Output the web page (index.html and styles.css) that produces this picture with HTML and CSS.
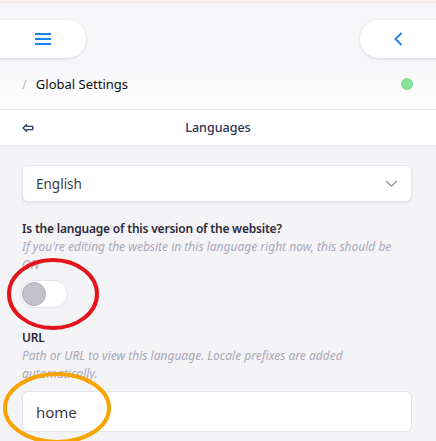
FILE: index.html
```html
<!DOCTYPE html>
<html lang="en">
<head>
  <meta charset="UTF-8">
  <meta name="viewport" content="width=device-width, initial-scale=1.0">
  <title>Global Settings - Languages</title>
  <link rel="stylesheet" href="styles.css">
</head>
<body>
  <div class="app">
    <header class="topbar">
      <button class="pill pill-left" aria-label="Menu">
        <svg width="16" height="12" viewBox="0 0 16 12"><path d="M0 1h16M0 6h16M0 11h16" stroke="#1a82f7" stroke-width="2"/></svg>
      </button>
      <button class="pill pill-right" aria-label="Back">
        <svg width="9" height="14" viewBox="0 0 9 14"><path d="M7.5 1L1.5 7l6 6" fill="none" stroke="#1a82f7" stroke-width="1.8"/></svg>
      </button>
    </header>

    <nav class="crumbs">
      <span class="sep">/</span>
      <span class="crumb">Global Settings</span>
      <span class="status"></span>
    </nav>

    <div class="panel-head">
      <svg class="back" width="12" height="8" viewBox="0 0 12 8"><path d="M4.5 0.8L1 4l3.5 3.2V5.6h6.2V2.4H4.5z" fill="none" stroke="#2f3a6e" stroke-width="1.4" stroke-linejoin="round"/></svg>
      <h2>Languages</h2>
    </div>

    <main class="form">
      <div class="select">
        <span>English</span>
        <svg width="13" height="7" viewBox="0 0 13 7"><path d="M1 1l5.5 5L12 1" fill="none" stroke="#9d97ab" stroke-width="1.5"/></svg>
      </div>

      <div class="field">
        <label>Is the language of this version of the website?</label>
        <p class="hint">If you're editing the website in this language right now, this should be ON</p>
        <div class="toggle"><span class="knob"></span></div>
      </div>

      <div class="field">
        <label>URL</label>
        <p class="hint">Path or URL to view this language. Locale prefixes are added automatically.</p>
        <div class="input">home</div>
      </div>
    </main>

    <!-- annotation marks drawn over the form -->
    <svg class="mark mark-red" width="96" height="76" viewBox="0 0 96 76"><ellipse cx="48" cy="38" rx="44" ry="34" fill="none" stroke="#e3141c" stroke-width="4"/></svg>
    <svg class="mark mark-orange" width="112" height="76" viewBox="0 0 112 76"><ellipse cx="56" cy="38" rx="52" ry="34" fill="none" stroke="#f7a400" stroke-width="4"/></svg>
  </div>
</body>
</html>
```

FILE: styles.css
```css
* {
  margin: 0;
  padding: 0;
  box-sizing: border-box;
}

body {
  font-family: "Noto Sans", "Open Sans", sans-serif;
  background-color: #f4f4f7;
  color: #2c2a3a;
  overflow: hidden;
}

.app {
  position: relative;
  width: 436px;
  height: 441px;
  overflow: hidden;
}

/* pasek z przyciskami */
.topbar {
  display: flex;
  justify-content: space-between;
  margin-top: 2px;
  padding: 17px 0 7px;
  border-top: 1px solid #fde3d6;
  background-color: #f6f6f8;
}

.pill {
  display: flex;
  align-items: center;
  justify-content: center;
  height: 38px;
  border: none;
  border-radius: 19px;
  background-color: #fff;
  box-shadow: 0 1px 3px rgba(40, 40, 80, 0.14);
  cursor: pointer;
}

.pill-left {
  width: 116px;
  margin-left: -30px;
  padding-left: 30px;
}

.pill-right {
  width: 110px;
  margin-right: -34px;
  padding-right: 34px;
}

.crumbs {
  display: flex;
  align-items: center;
  height: 45px;
  padding: 0 23px 6px 22px;
  background: linear-gradient(#f8f8fa, #fdfdfe);
  border-bottom: 1px solid #e2e2ea;
  font-size: 13px;
}

.sep {
  color: #b4b4be;
  margin-right: 9px;
}

.crumb {
  color: #111;
  flex: 1;
}

.status {
  width: 12px;
  height: 12px;
  border-radius: 50%;
  background-color: #88e39d;
  border: 1px solid #7bd992;
}

.panel-head {
  position: relative;
  height: 36px;
  display: flex;
  align-items: center;
  justify-content: center;
  background-color: #fff;
  border-bottom: 1px solid #e9e9ef;
}

.panel-head .back {
  position: absolute;
  left: 22px;
  top: 14px;
}

.panel-head h2 {
  font-size: 12.5px;
  font-weight: 500;
  color: #2e3154;
}

.form {
  padding: 19px 24px 0 22px;
}

.select {
  display: flex;
  align-items: center;
  justify-content: space-between;
  height: 37px;
  padding: 0 13px;
  background-color: #fff;
  border: 1px solid #e6e4ee;
  border-radius: 6px;
  box-shadow: 0 1px 2px rgba(60, 50, 100, 0.12);
  font-size: 13.5px;
  color: #3d3b4a;
  margin-bottom: 18px;
}

.field label {
  display: block;
  font-size: 12px;
  font-weight: 600;
  line-height: 18px;
  letter-spacing: -0.2px;
  color: #2c2a3a;
}

.hint {
  font-size: 12px;
  font-style: italic;
  line-height: 18px;
  color: #aaa7b7;
  padding-right: 10px;
}

.toggle {
  position: relative;
  width: 48px;
  height: 28px;
  margin: 6px 0 21px -2px;
  border: 1px solid #e3e1ea;
  border-radius: 14px;
  background-color: #fff;
}

.knob {
  position: absolute;
  left: 1px;
  top: 1px;
  width: 24px;
  height: 24px;
  border-radius: 50%;
  background-color: #c4c1cd;
  border: 1px solid #b2afbd;
}

.input {
  display: flex;
  align-items: center;
  height: 41px;
  margin-top: 8px;
  padding: 0 13px;
  background-color: #fff;
  border: 1px solid #e4e2ec;
  border-radius: 6px;
  font-size: 15px;
  color: #3d3b4a;
}

/* znaczniki (adnotacje) */
.mark {
  position: absolute;
}

.mark-red {
  left: 5px;
  top: 256px;
}

.mark-orange {
  left: 1px;
  top: 370px;
}
```
